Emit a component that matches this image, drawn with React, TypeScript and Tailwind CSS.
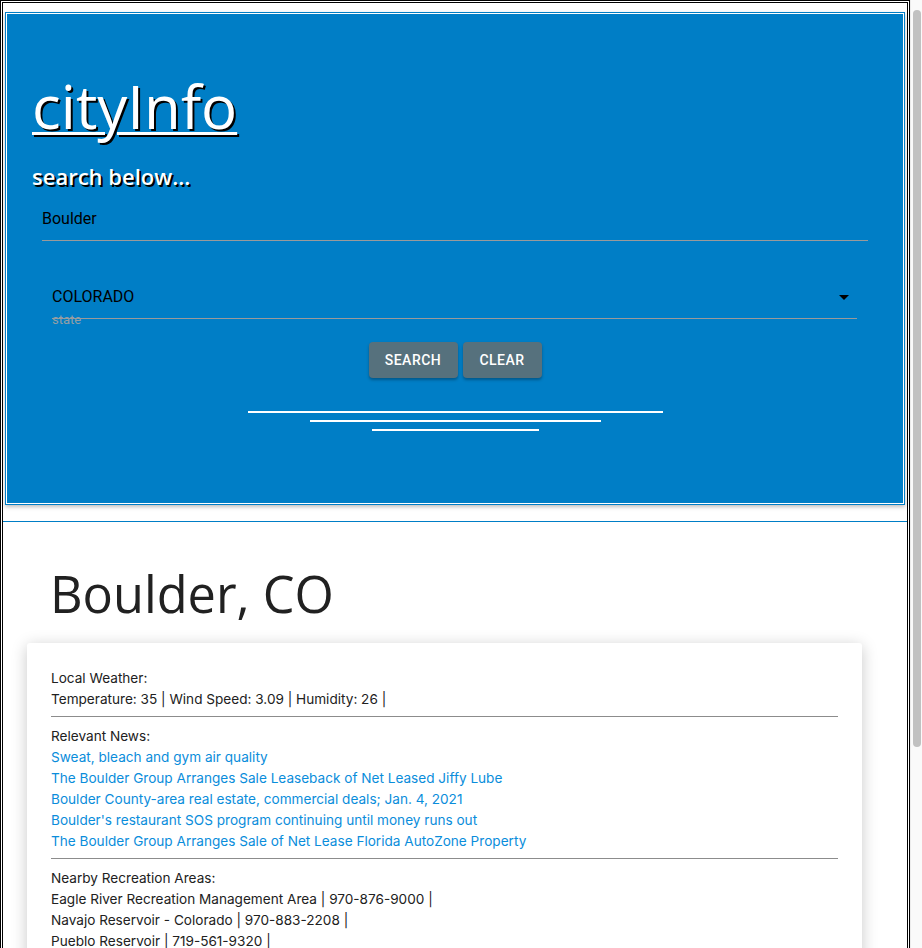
import React from 'react';

const news = [
  'Sweat, bleach and gym air quality',
  'The Boulder Group Arranges Sale Leaseback of Net Leased Jiffy Lube',
  'Boulder County-area real estate, commercial deals; Jan. 4, 2021',
  "Boulder's restaurant SOS program continuing until money runs out",
  'The Boulder Group Arranges Sale of Net Lease Florida AutoZone Property',
];

const recreation = [
  'Eagle River Recreation Management Area | 970-876-9000 |',
  'Navajo Reservoir - Colorado | 970-883-2208 |',
  'Pueblo Reservoir | 719-561-9320 |',
];

function Divider() {
  return <div className="mt-[6px] mb-[9px] h-px bg-[#8c8c8c]" />;
}

export default function App() {
  return (
    <div className="flex h-screen w-full overflow-hidden bg-white">
      <main className="w-[910px] shrink-0">
        <div className="border-[3px] border-double border-black pb-[260px] font-['Open_Sans',sans-serif]">
          {/* header */}
          <header className="mx-[2px] mt-[9px] border-[3px] border-double border-[#007ec6] bg-[#007ec6] bg-clip-padding pt-[55px] pb-[71px] shadow-[0_2px_4px_rgba(0,0,0,0.25)]">
            <div className="pl-[24px]">
              <h1 className="text-[60px] leading-[72px] font-medium text-white underline decoration-[3px] underline-offset-[3px] [text-shadow:2px_2px_0_#000]">
                cityInfo
              </h1>
              <p className="mt-[20px] text-[22px] leading-[28px] font-semibold text-white [text-shadow:2px_2px_0_#000]">
                search below...
              </p>
            </div>

            <div className="mx-[34px] mt-[10px]">
              <input
                readOnly
                value="Boulder"
                className="block w-full border-b border-[#9a9a9a] bg-transparent pt-[9px] pb-[11px] font-['Roboto',sans-serif] text-[16px] leading-[20px] text-black outline-none"
              />
            </div>

            <div className="relative ml-[44px] mr-[45px] mt-[38px]">
              <div className="border-b border-[#9a9a9a] pt-[8px] pb-[11px] font-['Roboto',sans-serif] text-[16px] leading-[20px] text-black">
                COLORADO
              </div>
              <svg className="absolute right-[8px] top-[16px]" width="10" height="5" viewBox="0 0 10 5">
                <polygon points="0,0 10,0 5,5" fill="#000" />
              </svg>
              <div className="relative -mt-[7px] font-['Roboto',sans-serif] text-[13px] leading-[16px] text-[#939ea5]">state</div>
            </div>

            <div className="mt-[14px] flex justify-center gap-[5px] font-['Roboto',sans-serif]">
              <button className="h-[36px] w-[89px] rounded-[4px] bg-[#56717d] text-[14px] font-medium tracking-[0.5px] text-white shadow-[0_2px_3px_rgba(0,0,0,0.3)]">
                SEARCH
              </button>
              <button className="h-[36px] w-[79px] rounded-[4px] bg-[#56717d] text-[14px] font-medium tracking-[0.5px] text-white shadow-[0_2px_3px_rgba(0,0,0,0.3)]">
                CLEAR
              </button>
            </div>

            <div className="mt-[33px] flex flex-col items-center gap-[7px]">
              <div className="h-[2px] w-[415px] bg-white" />
              <div className="h-[2px] w-[291px] bg-white" />
              <div className="h-[2px] w-[167px] bg-white" />
            </div>
          </header>

          <div className="mt-[16px] h-px bg-[#007ec6]" />

          <h2 className="ml-[47px] mt-[42px] text-[50.5px] leading-[60px] text-[#212121]">Boulder, CO</h2>

          <section className="ml-[24px] mt-[19px] w-[835px] rounded-[3px] bg-white px-[24px] pt-[25px] pb-[40px] font-['Inter',sans-serif] text-[13.6px] leading-[21px] text-[#212121] shadow-[0_3px_16px_rgba(0,0,0,0.22)]">
            <p>Local Weather:</p>
            <p>Temperature: 35 | Wind Speed: 3.09 | Humidity: 26 |</p>
            <Divider />
            <p>Relevant News:</p>
            {news.map((n) => (
              <a key={n} href="#" className="block text-[#0a8ddb]">
                {n}
              </a>
            ))}
            <Divider />
            <p>Nearby Recreation Areas:</p>
            {recreation.map((r) => (
              <p key={r}>{r}</p>
            ))}
          </section>
        </div>
      </main>

      {/* scrollbar */}
      <aside className="w-[12px] shrink-0 border-l border-[#ececec] bg-[#fafafa] pl-[2px] pr-[1px] pt-[10px]">
        <div className="h-[737px] rounded-full bg-[#c1c1c1]" />
      </aside>
    </div>
  );
}
